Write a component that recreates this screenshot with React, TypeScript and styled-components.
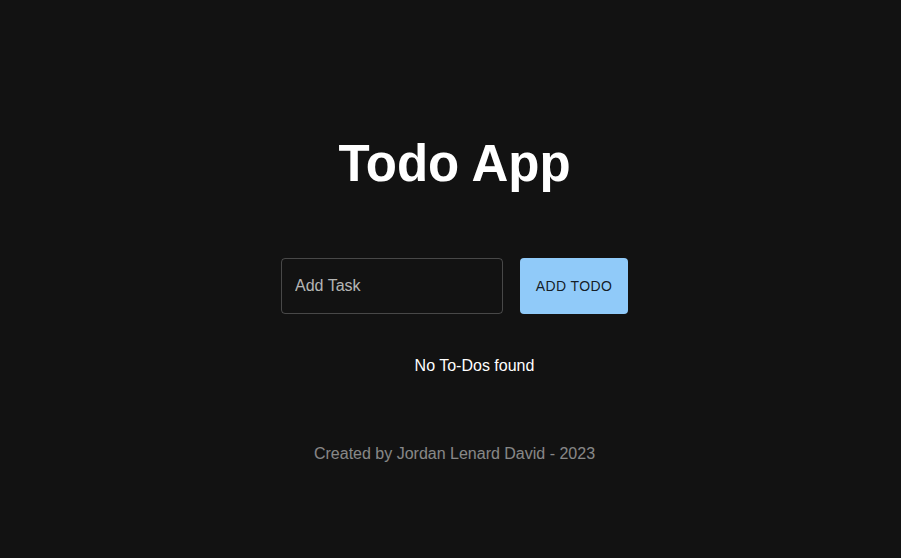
import { FC } from 'react';
import styled, { createGlobalStyle } from 'styled-components';

const GlobalStyle = createGlobalStyle`
  html, body {
    margin: 0;
    padding: 0;
    background-color: #121212;
  }
  body {
    font-family: "Liberation Sans", Arial, sans-serif;
    color: #fff;
  }
`;

const Page = styled.div`
  min-height: 558px;
  box-sizing: border-box;
  padding: 134px 0 0 8px;
  display: flex;
  flex-direction: column;
  align-items: center;
`;

const Title = styled.h1`
  margin: 0;
  font-size: 51px;
  font-weight: 700;
  line-height: normal;
  color: #fff;
`;

const Form = styled.form`
  display: flex;
  align-items: center;
  gap: 17px;
  margin-top: 65px;
`;

const Field = styled.div`
  width: 222px;
  height: 56px;
  box-sizing: border-box;
  border: 1px solid rgba(255, 255, 255, 0.23);
  border-radius: 4px;
  display: flex;
  align-items: center;
  padding: 0 14px 0 13px;
`;

const Input = styled.input`
  width: 100%;
  border: none;
  outline: none;
  background: transparent;
  padding: 0;
  font-family: "Liberation Sans", Arial, sans-serif;
  font-size: 16px;
  color: #fff;
  &::placeholder {
    color: rgba(255, 255, 255, 0.7);
  }
`;

const Button = styled.button`
  width: 108px;
  height: 56px;
  border: none;
  border-radius: 4px;
  background-color: #90caf9;
  color: rgba(0, 0, 0, 0.87);
  font-family: "Liberation Sans", Arial, sans-serif;
  font-size: 14px;
  letter-spacing: 0.02857em;
  text-transform: uppercase;
  cursor: pointer;
`;

const List = styled.ul`
  margin: 43px 0 0;
  padding: 0 0 0 40px;
  list-style: none;
`;

const Empty = styled.li`
  font-size: 16px;
  line-height: normal;
  color: #fff;
  text-align: center;
`;

const Footer = styled.footer`
  margin-top: 70px;
  font-size: 16px;
  color: rgba(255, 255, 255, 0.5);
`;

const App: FC = () => {
  return (
    <>
      <GlobalStyle />
      <Page>
        <Title>Todo App</Title>
        <Form onSubmit={(e) => e.preventDefault()}>
          <Field>
            <Input placeholder="Add Task" />
          </Field>
          <Button type="submit">Add Todo</Button>
        </Form>
        <List>
          <Empty>No To-Dos found</Empty>
        </List>
        <Footer>Created by Jordan Lenard David - 2023</Footer>
      </Page>
    </>
  );
};

export default App;
